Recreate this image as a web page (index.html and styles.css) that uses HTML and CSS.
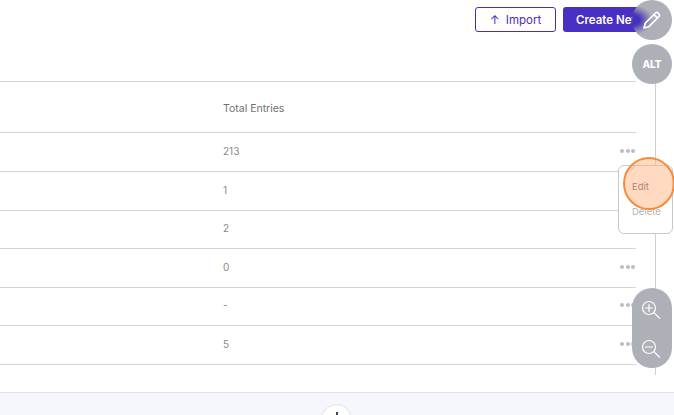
FILE: index.html
```html
<!DOCTYPE html>
<html lang="en">
<head>
<meta charset="utf-8">
<title>Entries</title>
<link rel="stylesheet" href="styles.css">
</head>
<body>
<div class="page">
  <main class="main">
    <header class="toolbar">
      <button class="btn btn-outline"><span class="arrow">↑</span>Import</button>
      <button class="btn btn-solid">Create New</button>
    </header>
    <section class="table">
      <div class="row head"><span class="cell">Total Entries</span></div>
      <div class="row r1"><span class="cell">213</span><span class="dots"><i></i><i></i><i></i></span></div>
      <div class="row r2"><span class="cell">1</span></div>
      <div class="row r2"><span class="cell">2</span></div>
      <div class="row r2"><span class="cell">0</span><span class="dots"><i></i><i></i><i></i></span></div>
      <div class="row r2"><span class="cell">-</span><span class="dots"><i></i><i></i><i></i></span></div>
      <div class="row r2"><span class="cell">5</span><span class="dots"><i></i><i></i><i></i></span></div>
    </section>
  </main>
  <footer class="footer"><button class="add"><span class="plus"></span></button></footer>

  <div class="rail"></div>
  <div class="menu">
    <span class="caret"></span>
    <span class="menu-item menu-active">Edit</span>
    <span class="menu-item">Delete</span>
  </div>

  <div class="tool tool-pen">
    <svg width="20" height="20" viewBox="0 0 20 20" fill="none" stroke="#fff" stroke-width="1.7" stroke-linejoin="round" stroke-linecap="round"><path d="M2 18l1.3-4.8L13.5 3a1.8 1.8 0 0 1 2.5 0l1 1a1.8 1.8 0 0 1 0 2.5L6.8 16.7z"/><path d="M12 4.6l3.4 3.4"/></svg>
  </div>
  <div class="tool tool-alt">ALT</div>
  <div class="zoom-pill">
    <svg width="22" height="22" viewBox="0 0 22 22" fill="none" stroke="#fff" stroke-width="1.2" stroke-linecap="round"><circle cx="8" cy="9" r="6.5"/><path d="M12.8 13.6l5.9 5.6M8 5.5v7M4.5 9h7"/></svg>
    <svg width="22" height="22" viewBox="0 0 22 22" fill="none" stroke="#fff" stroke-width="1.2" stroke-linecap="round"><circle cx="8" cy="9" r="6.5"/><path d="M12.8 13.6l5.9 5.6M4.5 9h7"/></svg>
  </div>
  <div class="spot"></div>
</div>
</body>
</html>
```

FILE: styles.css
```css
* { box-sizing: border-box; }
html, body { margin: 0; padding: 0; }
body { font-family: "Inter", "Liberation Sans", sans-serif; background: #fff; }
.page { position: relative; width: 674px; height: 415px; overflow: hidden; }
.main { height: 393px; background: #fff; border-bottom: 1px solid #dfe1e7; }
.toolbar { height: 81px; display: flex; gap: 7px; padding: 7px 0 0 475px; align-items: flex-start; width: 800px; }
.btn { height: 25px; border-radius: 3px; font: 500 11.5px "Inter", "Liberation Sans", sans-serif; display: flex; align-items: center; justify-content: center; }
.btn-outline { width: 81px; background: #fff; border: 1px solid #4a2fb5; color: #4a2fb5; gap: 6px; font-weight: 400; }
.arrow { font-size: 12px; }
.btn-solid { width: 100px; background: #4a2fc4; border: 0; color: #fff; justify-content: flex-start; padding-left: 13px; font-weight: 600; }
.table { width: 636px; border-top: 1px solid #d4d4d6; }
.row { display: flex; align-items: center; justify-content: space-between; padding: 0 1px 0 223px; border-bottom: 1px solid #d4d4d6; font-size: 10px; color: #8a8a8a; }
.head { height: 51px; color: #707070; font-size: 10.5px; padding-top: 2px; }
.r1 { height: 39px; padding-bottom: 2px; }
.r2 { height: 38.5px; padding-bottom: 2px; }
.dots { display: flex; gap: 1.5px; }
.dots i { width: 4px; height: 4px; border-radius: 50%; background: #bcbcc3; }
.footer { height: 22px; background: #f6f7fc; position: relative; }
.add { position: absolute; left: 321px; top: 11px; width: 31px; height: 31px; padding: 0; border-radius: 50%; border: 1px solid #dfe1e7; background: #fff; }
.plus { position: absolute; left: 14px; top: 7px; width: 2px; height: 14px; background: #3f4660; }
.menu { position: absolute; left: 618px; top: 165px; width: 55px; height: 69px; background: #fff; border: 1px solid #c8c8cc; border-radius: 6px; padding: 15px 0 0 13px; display: flex; flex-direction: column; gap: 13px; font-size: 9.5px; color: #b4b4b4; }
.menu-item { line-height: 12px; }
.menu-active { color: #63476f; }
.caret { position: absolute; left: 8px; top: -5px; width: 8px; height: 8px; border-right: 1px solid #c8c8cc; transform: rotate(45deg); }
.rail { position: absolute; left: 655px; top: 84px; width: 1px; height: 291px; background: #cfcfd3; }
.tool { position: absolute; left: 632px; width: 40px; height: 40px; border-radius: 50%; display: flex; align-items: center; justify-content: center; color: #fff; }
.tool-pen { top: 0; background: radial-gradient(ellipse 21px 15px at 0 20px, #4630ba 35%, rgba(110,105,175,.75) 70%, rgba(174,176,184,0) 100%), #aeb0b8; }
.tool-alt { top: 44px; font-weight: 800; font-size: 10px; background: #aeb0b8; }
.zoom-pill { position: absolute; left: 632px; top: 288px; width: 40px; height: 80px; border-radius: 20px; background: #aeb0b8; display: flex; flex-direction: column; align-items: center; gap: 17px; padding-top: 11px; }
.spot { position: absolute; left: 623px; top: 157px; width: 52px; height: 53px; border-radius: 50%; background: rgba(255,180,130,.5); border: 2px solid #f58b3c; }
```
